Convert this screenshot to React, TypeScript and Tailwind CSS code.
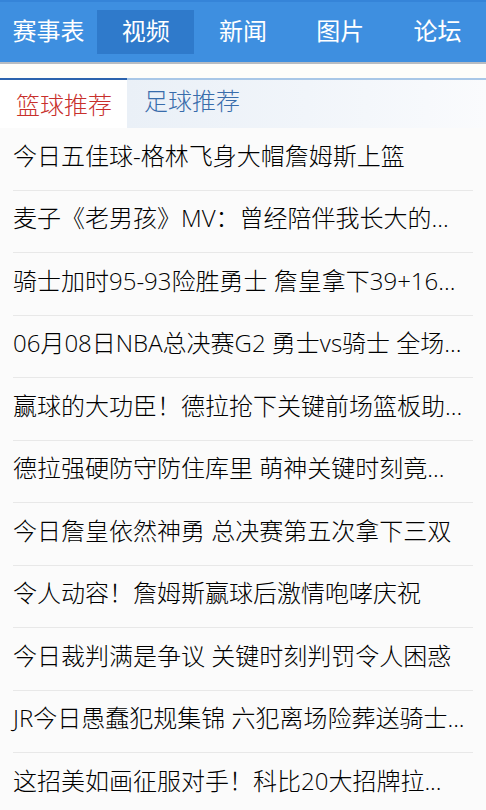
import React from "react";

const nav = ["赛事表", "视频", "新闻", "图片", "论坛"];
const items = [
  "今日五佳球-格林飞身大帽詹姆斯上篮",
  "麦子《老男孩》MV：曾经陪伴我长大的...",
  "骑士加时95-93险胜勇士 詹皇拿下39+16...",
  "06月08日NBA总决赛G2 勇士vs骑士 全场...",
  "赢球的大功臣！德拉抢下关键前场篮板助...",
  "德拉强硬防守防住库里 萌神关键时刻竟...",
  "今日詹皇依然神勇 总决赛第五次拿下三双",
  "令人动容！詹姆斯赢球后激情咆哮庆祝",
  "今日裁判满是争议 关键时刻判罚令人困惑",
  "JR今日愚蠢犯规集锦 六犯离场险葬送骑士...",
  "这招美如画征服对手！科比20大招牌拉...",
];

export default function App() {
  return (
    <div
      className="w-[486px] h-[810px] overflow-hidden bg-[#fbfbfb]"
      style={{ fontFamily: '"Open Sans", "Noto Sans CJK SC", sans-serif' }}
    >
      <div className="h-[62px] bg-[#3e8fe0] border-t-2 border-[#3584d8] grid grid-cols-5 items-center">
        {nav.map((n, i) => (
          <div
            key={n}
            className={`h-[44px] flex items-center justify-center text-white text-[24px] leading-none pb-[2px] ${
              i === 1 ? "bg-[#2f7acb]" : ""
            }`}
          >
            {n}
          </div>
        ))}
      </div>
      <div className="h-[2px] bg-[#b7bcc2]" />
      <div className="h-[14px] bg-[#fdfdfa]" />
      <div className="flex h-[50px] font-light">
        <div className="w-[127px] border-t-2 border-[#2b62ad] bg-white flex items-center pl-[16px] pt-[2px] text-[24px] text-[#c8302c]">
          篮球推荐
        </div>
        <div className="flex-1 border-t-2 border-[#a8c7e7] bg-gradient-to-r from-[#eaf0f7] via-[#f1f5fa] to-[#fafbfd] flex items-center pl-[17px] pb-[6px] text-[24px] text-[#386cab]">
          足球推荐
        </div>
      </div>
      <div className="px-[13px] font-light">
        {items.map((t) => (
          <div
            key={t}
            className="h-[62.5px] border-b border-[#e8e8e8] flex items-center pb-[6px] text-[24px] text-black whitespace-nowrap"
          >
            {t}
          </div>
        ))}
      </div>
    </div>
  );
}
